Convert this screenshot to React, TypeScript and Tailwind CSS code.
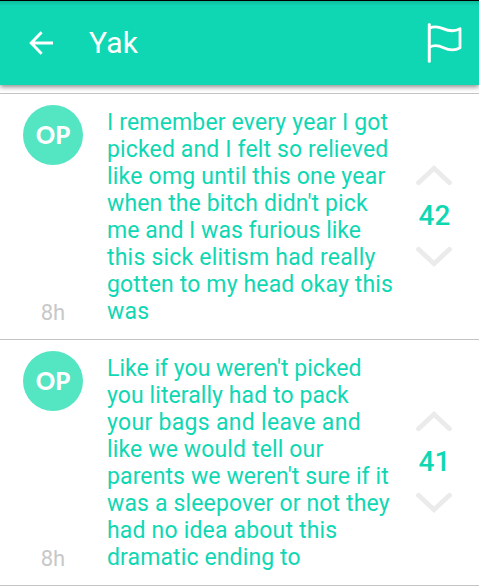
import React from 'react';

interface Line {
  text: string;
  tracking: number;
}

interface Reply {
  id: number;
  lines: Line[];
  votes: number;
  age: string;
}

const replies: Reply[] = [
  {
    id: 1,
    lines: [
      { text: 'I remember every year I got', tracking: 0.15 },
      { text: 'picked and I felt so relieved', tracking: 0.14 },
      { text: 'like omg until this one year', tracking: 0.21 },
      { text: "when the bitch didn't pick", tracking: 0.12 },
      { text: 'me and I was furious like', tracking: 0.02 },
      { text: 'this sick elitism had really', tracking: 0.21 },
      { text: 'gotten to my head okay this', tracking: 0.15 },
      { text: 'was', tracking: 0.2 },
    ],
    votes: 42,
    age: '8h',
  },
  {
    id: 2,
    lines: [
      { text: "Like if you weren't picked", tracking: 0.02 },
      { text: 'you literally had to pack', tracking: 0.08 },
      { text: 'your bags and leave and', tracking: 0.3 },
      { text: 'like we would tell our', tracking: 0.14 },
      { text: "parents we weren't sure if it", tracking: 0.11 },
      { text: 'was a sleepover or not they', tracking: 0.15 },
      { text: 'had no idea about this', tracking: 0.18 },
      { text: 'dramatic ending to', tracking: 0.12 },
    ],
    votes: 41,
    age: '8h',
  },
];

const BackIcon = () => (
  <svg className="block w-6 h-6" viewBox="0 0 24 24" fill="none" stroke="white" strokeWidth="2.9">
    <path d="M12.6 1.2 2.2 12l10.4 10.8M2.4 12H24" />
  </svg>
);

const FlagIcon = () => (
  <svg className="block w-9 h-10" viewBox="0 0 36 40" fill="none" stroke="white" strokeWidth="2.8" strokeLinecap="round" strokeLinejoin="round">
    <path d="M2.3 1.6V38.2" strokeWidth="3" />
    <path d="M2.4 5.2C6.5 3.3 11 3.4 16 5.6C22 8.2 27.5 9 33 5.6V24.8C27.5 28 22 27.2 16.5 24.7C11.5 22.3 6.5 22.1 2.4 24.2" />
  </svg>
);

const VoteArrow = ({ down = false }: { down?: boolean }) => (
  <button className="block" aria-label={down ? 'Downvote' : 'Upvote'}>
    <svg className={down ? 'block w-9 h-[21px] rotate-180' : 'block w-9 h-[21px]'} viewBox="0 0 36 21" fill="none" stroke="#ebebeb" strokeWidth="4.8" strokeLinecap="round" strokeLinejoin="miter">
      <path d="M2.5 17.7 18 3.3 33.5 17.7" />
    </svg>
  </button>
);

const ReplyRow = ({ reply }: { reply: Reply }) => (
  <li className="flex h-[246px] border-b border-[#c4c4c4]">
    <div className="flex w-[107px] flex-col items-start justify-between pl-[23px] pt-[11px] pb-[13px]">
      <div className="flex w-[60px] h-[60px] items-center justify-center rounded-full bg-[#54e5c3] font-[Lato,sans-serif] text-2xl font-black text-white">
        OP
      </div>
      <div className="w-[60px] text-center text-[22px] leading-[27px] text-[#c8c8c8]">{reply.age}</div>
    </div>
    <p className="w-[300px] pt-[15px] text-[23px] leading-[27px] whitespace-nowrap text-[#10d7b3]">
      {reply.lines.map((line) => (
        <span key={line.text} className="block" style={{ letterSpacing: line.tracking }}>{line.text}</span>
      ))}
    </p>
    <div className="flex w-[54px] flex-col items-center pt-[71px]">
      <VoteArrow />
      <span className="my-[14px] h-8 pl-px text-[28px] leading-8 font-medium text-[#10d7b3]">{reply.votes}</span>
      <VoteArrow down />
    </div>
  </li>
);

const App: React.FC = () => {
  return (
    <div className="h-[587px] w-[479px] overflow-hidden bg-white font-[Roboto,sans-serif]">
      <header className="flex h-[85px] items-center border-t border-black bg-[#10d7b3] bg-linear-to-b from-black/12 to-transparent to-6% pl-[29px] pr-4 shadow-[0_2px_5px_rgba(0,0,0,0.45)]">
        <button aria-label="Back">
          <BackIcon />
        </button>
        <h1 className="ml-9 flex-1 text-[30px] leading-9 tracking-[0.3px] text-white">Yak</h1>
        <button aria-label="Flag">
          <FlagIcon />
        </button>
      </header>
      <ul className="mt-2 border-t border-[#c4c4c4]">
        {replies.map((reply) => (
          <ReplyRow key={reply.id} reply={reply} />
        ))}
      </ul>
    </div>
  );
};

export default App;
